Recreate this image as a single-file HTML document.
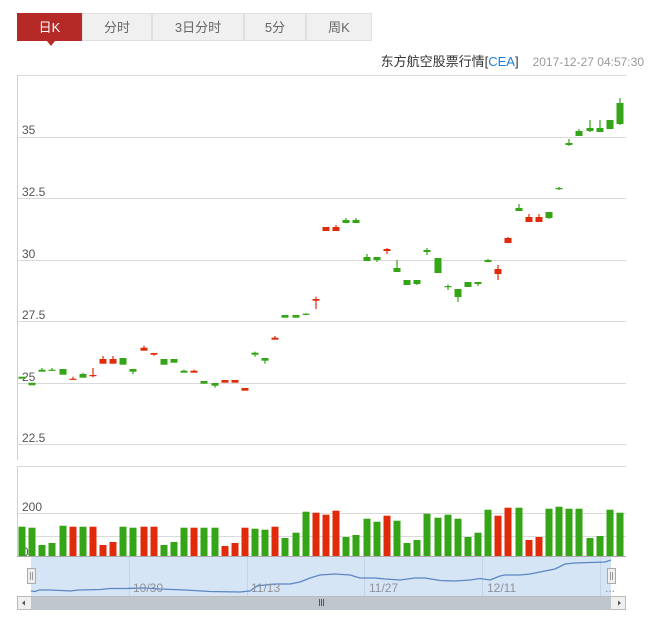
<!DOCTYPE html>
<html><head><meta charset="utf-8"><style>
body{margin:0;background:#fff;width:656px;height:622px;overflow:hidden;font-family:"Liberation Sans","Noto Sans CJK SC",sans-serif;}
.tab{position:absolute;top:13px;height:28px;line-height:28px;text-align:center;font-size:13px;color:#666;background:#f0f0f0;border:1px solid #e0e0e0;box-sizing:border-box;}
</style></head><body>
<div class="tab" style="left:17px;width:65px;background:#b52a27;border-color:#b52a27;color:#fff;">日K</div>
<div style="position:absolute;left:47px;top:41px;width:0;height:0;border-left:4px solid transparent;border-right:4px solid transparent;border-top:5px solid #b52a27;"></div>
<div class="tab" style="left:82px;width:70px;">分时</div>
<div class="tab" style="left:152px;width:92px;">3日分时</div>
<div class="tab" style="left:244px;width:62px;">5分</div>
<div class="tab" style="left:306px;width:66px;">周K</div>
<div style="position:absolute;right:12px;top:51px;font-size:13px;color:#333;white-space:nowrap;">东方航空股票行情[<span style="color:#1a7fd4">CEA</span>]<span style="color:#999;font-size:12px;margin-left:14px;">2017-12-27 04:57:30</span></div>
<svg width="656" height="622" style="position:absolute;left:0;top:0" xmlns="http://www.w3.org/2000/svg">
<g stroke="#d9d9d9" stroke-width="1">
<line x1="17" y1="75.5" x2="626" y2="75.5"/>
<line x1="17" y1="137.5" x2="626" y2="137.5"/>
<line x1="17" y1="198.5" x2="626" y2="198.5"/>
<line x1="17" y1="260.5" x2="626" y2="260.5"/>
<line x1="17" y1="321.5" x2="626" y2="321.5"/>
<line x1="17" y1="383.5" x2="626" y2="383.5"/>
<line x1="17" y1="444.5" x2="626" y2="444.5"/>
<line x1="17" y1="466.5" x2="626" y2="466.5"/>
<line x1="17" y1="513.5" x2="626" y2="513.5"/>
<line x1="17" y1="536.5" x2="626" y2="536.5"/>
</g>
<line x1="17.5" y1="75" x2="17.5" y2="460" stroke="#c5d3e3"/>
<line x1="17.5" y1="466" x2="17.5" y2="557" stroke="#c5d3e3"/>
<g font-size="12" fill="#555" font-family="Liberation Sans,sans-serif">
<text x="22" y="134">35</text><text x="22" y="196">32.5</text><text x="22" y="258">30</text><text x="22" y="319">27.5</text><text x="22" y="381">25</text><text x="22" y="442">22.5</text><text x="22" y="511">200</text><text x="22" y="556">0</text>
</g>
<g stroke-width="1.2">
<!-- wicks -->
<g stroke="#34a516">
<line x1="42" y1="368" x2="42" y2="371"/><line x1="52" y1="368" x2="52" y2="371"/><line x1="83" y1="372.7" x2="83" y2="377"/><line x1="133" y1="370" x2="133" y2="374.3"/><line x1="184" y1="369.7" x2="184" y2="372"/><line x1="215" y1="384" x2="215" y2="387.7"/><line x1="255" y1="351.7" x2="255" y2="356.7"/><line x1="265" y1="359" x2="265" y2="363.7"/><line x1="306" y1="313" x2="306" y2="314.7"/>
<line x1="346" y1="218" x2="346" y2="221"/><line x1="356" y1="218" x2="356" y2="221"/><line x1="367" y1="254" x2="367" y2="259"/><line x1="377" y1="258" x2="377" y2="262"/><line x1="397" y1="260" x2="397" y2="270"/><line x1="417" y1="282" x2="417" y2="285"/><line x1="427" y1="248" x2="427" y2="255"/><line x1="448" y1="284.5" x2="448" y2="290"/><line x1="458" y1="292" x2="458" y2="302"/><line x1="478" y1="283" x2="478" y2="286"/><line x1="488" y1="259" x2="488" y2="261"/><line x1="519" y1="204" x2="519" y2="209"/><line x1="549" y1="215" x2="549" y2="219"/><line x1="559" y1="187" x2="559" y2="190"/><line x1="569" y1="139" x2="569" y2="146"/><line x1="579" y1="129" x2="579" y2="133"/><line x1="590" y1="120" x2="590" y2="132"/><line x1="600" y1="120" x2="600" y2="130"/><line x1="610" y1="125" x2="610" y2="129"/><line x1="620" y1="98" x2="620" y2="125"/>
</g>
<g stroke="#e02a0a">
<line x1="73" y1="376.7" x2="73" y2="379"/><line x1="93" y1="368" x2="93" y2="377.3"/><line x1="103" y1="356" x2="103" y2="360"/><line x1="113" y1="356" x2="113" y2="360"/><line x1="144" y1="345.7" x2="144" y2="348"/><line x1="154" y1="354" x2="154" y2="355.7"/><line x1="194" y1="369.7" x2="194" y2="372"/><line x1="275" y1="336" x2="275" y2="338"/><line x1="316" y1="296.7" x2="316" y2="309"/><line x1="336" y1="225" x2="336" y2="228"/><line x1="387" y1="248" x2="387" y2="254"/><line x1="498" y1="265" x2="498" y2="280"/><line x1="508" y1="237" x2="508" y2="240"/><line x1="529" y1="214" x2="529" y2="218"/><line x1="539" y1="214" x2="539" y2="218"/>
</g>
</g>
<g fill="#34a516">
<rect x="18.5" y="376.7" width="7" height="2"/><rect x="28.5" y="382.7" width="7" height="2.6"/><rect x="38.5" y="369.7" width="7" height="2"/><rect x="48.5" y="369.7" width="7" height="1.2"/><rect x="59.5" y="369" width="7" height="5.7"/><rect x="79.5" y="374" width="7" height="3.7"/><rect x="119.5" y="358" width="7" height="6.7"/><rect x="129.5" y="369" width="7" height="2.7"/><rect x="160.5" y="359" width="7" height="5.7"/><rect x="170.5" y="359" width="7" height="3.7"/><rect x="180.5" y="370.7" width="7" height="2"/><rect x="200.5" y="381" width="7" height="2.7"/><rect x="211.5" y="383" width="7" height="2.7"/><rect x="251.5" y="352.7" width="7" height="2"/><rect x="261.5" y="358" width="7" height="2.7"/><rect x="281.5" y="315" width="7" height="2.7"/><rect x="292.5" y="315" width="7" height="2.7"/><rect x="302.5" y="313.7" width="7" height="1.2"/>
<rect x="342.5" y="220" width="7" height="3"/><rect x="352.5" y="220" width="7" height="3"/><rect x="363.5" y="257" width="7" height="4"/><rect x="373.5" y="257" width="7" height="3"/><rect x="393.5" y="268" width="7" height="4"/><rect x="403.5" y="280" width="7" height="5"/><rect x="413.5" y="280" width="7" height="4"/><rect x="423.5" y="250" width="7" height="2"/><rect x="434.5" y="258" width="7" height="15"/><rect x="444.5" y="286" width="7" height="1.2"/><rect x="454.5" y="289" width="7" height="8"/><rect x="464.5" y="282" width="7" height="5"/><rect x="474.5" y="282" width="7" height="2"/><rect x="484.5" y="260" width="7" height="2"/><rect x="515.5" y="208" width="7" height="3"/><rect x="545.5" y="212" width="7" height="6"/><rect x="555.5" y="188" width="7" height="1.2"/><rect x="565.5" y="143" width="7" height="2"/><rect x="575.5" y="131" width="7" height="5"/><rect x="586.5" y="128" width="7" height="3"/><rect x="596.5" y="128" width="7" height="4"/><rect x="606.5" y="120" width="7" height="9"/><rect x="616.5" y="103" width="7" height="21"/>
</g>
<g fill="#e02a0a">
<rect x="69.5" y="378.7" width="7" height="1.2"/><rect x="89.5" y="375" width="7" height="1.2"/><rect x="99.5" y="359" width="7" height="4.7"/><rect x="109.5" y="359" width="7" height="4.7"/><rect x="140.5" y="347.7" width="7" height="3"/><rect x="150.5" y="353" width="7" height="1.7"/><rect x="190.5" y="370.7" width="7" height="2"/><rect x="221.5" y="380" width="7" height="2.7"/><rect x="231.5" y="380" width="7" height="2.7"/><rect x="241.5" y="388" width="7" height="2.7"/><rect x="271.5" y="337.7" width="7" height="2"/><rect x="312.5" y="299" width="7" height="1.7"/><rect x="322.5" y="227" width="7" height="4"/><rect x="332.5" y="227" width="7" height="4"/><rect x="383.5" y="249" width="7" height="2"/><rect x="494.5" y="269" width="7" height="5"/><rect x="504.5" y="238" width="7" height="5"/><rect x="525.5" y="217" width="7" height="5"/><rect x="535.5" y="217" width="7" height="5"/>
</g>
<!-- volume -->
<g fill="#34a516">
<rect x="18.5" y="526.7" width="7" height="30.3"/><rect x="28.5" y="527.7" width="7" height="29.3"/><rect x="38.5" y="545" width="7" height="12"/><rect x="48.5" y="543" width="7" height="14"/><rect x="59.5" y="525.7" width="7" height="31.3"/><rect x="79.5" y="526.7" width="7" height="30.3"/><rect x="119.5" y="526.7" width="7" height="30.3"/><rect x="129.5" y="527.7" width="7" height="29.3"/><rect x="160.5" y="545" width="7" height="12"/><rect x="170.5" y="542" width="7" height="15"/><rect x="180.5" y="527.7" width="7" height="29.3"/><rect x="200.5" y="527.7" width="7" height="29.3"/><rect x="211.5" y="527.7" width="7" height="29.3"/><rect x="251.5" y="528.7" width="7" height="28.3"/><rect x="261.5" y="529.7" width="7" height="27.3"/><rect x="281.5" y="538" width="7" height="19"/><rect x="292.5" y="532.7" width="7" height="24.3"/><rect x="302.5" y="511.7" width="7" height="45.3"/>
<rect x="342.5" y="537" width="7" height="20"/><rect x="352.5" y="535" width="7" height="22"/><rect x="363.5" y="518.7" width="7" height="38.3"/><rect x="373.5" y="521.7" width="7" height="35.3"/><rect x="393.5" y="520.7" width="7" height="36.3"/><rect x="403.5" y="543" width="7" height="14"/><rect x="413.5" y="540" width="7" height="17"/><rect x="423.5" y="513.7" width="7" height="43.3"/><rect x="434.5" y="517.7" width="7" height="39.3"/><rect x="444.5" y="514.7" width="7" height="42.3"/><rect x="454.5" y="518.7" width="7" height="38.3"/><rect x="464.5" y="537" width="7" height="20"/><rect x="474.5" y="532.7" width="7" height="24.3"/><rect x="484.5" y="509.7" width="7" height="47.3"/><rect x="515.5" y="507.7" width="7" height="49.3"/><rect x="545.5" y="508.7" width="7" height="48.3"/><rect x="555.5" y="506.7" width="7" height="50.3"/><rect x="565.5" y="508.7" width="7" height="48.3"/><rect x="575.5" y="508.7" width="7" height="48.3"/><rect x="586.5" y="538" width="7" height="19"/><rect x="596.5" y="536" width="7" height="21"/><rect x="606.5" y="509.7" width="7" height="47.3"/><rect x="616.5" y="512.7" width="7" height="44.3"/>
</g>
<g fill="#e02a0a">
<rect x="69.5" y="526.7" width="7" height="30.3"/><rect x="89.5" y="526.7" width="7" height="30.3"/><rect x="99.5" y="545" width="7" height="12"/><rect x="109.5" y="542" width="7" height="15"/><rect x="140.5" y="526.7" width="7" height="30.3"/><rect x="150.5" y="526.7" width="7" height="30.3"/><rect x="190.5" y="527.7" width="7" height="29.3"/><rect x="221.5" y="546" width="7" height="11"/><rect x="231.5" y="543" width="7" height="14"/><rect x="241.5" y="527.7" width="7" height="29.3"/><rect x="271.5" y="526.7" width="7" height="30.3"/><rect x="312.5" y="512.7" width="7" height="44.3"/><rect x="322.5" y="514.7" width="7" height="42.3"/><rect x="332.5" y="510.7" width="7" height="46.3"/><rect x="383.5" y="515.7" width="7" height="41.3"/><rect x="494.5" y="515.7" width="7" height="41.3"/><rect x="504.5" y="507.7" width="7" height="49.3"/><rect x="525.5" y="540" width="7" height="17"/><rect x="535.5" y="537" width="7" height="20"/>
</g>
<line x1="17" y1="556.5" x2="626" y2="556.5" stroke="#aaa"/>
<!-- slider -->
<rect x="31" y="557" width="580" height="39" fill="#d6e5f6"/>
<g stroke="#c3d4e8"><line x1="129.5" y1="557" x2="129.5" y2="596"/><line x1="247.5" y1="557" x2="247.5" y2="596"/><line x1="364.5" y1="557" x2="364.5" y2="596"/><line x1="482.5" y1="557" x2="482.5" y2="596"/><line x1="600.5" y1="557" x2="600.5" y2="596"/></g>
<polyline fill="none" stroke="#5a86c2" stroke-width="1.3" points="31,591 35,591.5 39,590 50,590 61,590.5 70,591 79,590 100,589.5 110,588.5 125,588.5 145,588 160,589 185,590 210,591.5 240,592 250,591 257,586 265,585 275,584 290,584 300,582 310,578 320,575 335,574 350,575 360,578 375,578 385,579 400,580 415,578 425,578 440,580.5 455,581 470,580 480,578.5 490,580 500,576 505,575 520,575 530,574 545,571 555,569 565,564 575,563 590,562.5 605,562 611,560"/>
<g font-size="12" fill="#8d9199" font-family="Liberation Sans,sans-serif"><text x="133" y="592">10/30</text><text x="251" y="592">11/13</text><text x="369" y="592">11/27</text><text x="487" y="592">12/11</text><text x="605" y="592">...</text></g>
<rect x="27.5" y="568.5" width="8" height="15" fill="#eee" stroke="#aaa"/><line x1="30.5" y1="572" x2="30.5" y2="580" stroke="#999"/><line x1="32.5" y1="572" x2="32.5" y2="580" stroke="#999"/>
<rect x="607.5" y="568.5" width="8" height="15" fill="#eee" stroke="#aaa"/><line x1="610.5" y1="572" x2="610.5" y2="580" stroke="#999"/><line x1="612.5" y1="572" x2="612.5" y2="580" stroke="#999"/>
<!-- scrollbar -->
<rect x="17.5" y="596.5" width="608" height="13" fill="#f0f0f0" stroke="#bbb"/>
<rect x="31" y="597" width="580" height="13" fill="#c0c6ce"/>
<polygon points="22,603 25,600.5 25,605.5" fill="#555"/><polygon points="621,603 618,600.5 618,605.5" fill="#555"/>
<g stroke="#555"><line x1="319.5" y1="599" x2="319.5" y2="606"/><line x1="321.5" y1="599" x2="321.5" y2="606"/><line x1="323.5" y1="599" x2="323.5" y2="606"/></g>
</svg>
</body></html>
